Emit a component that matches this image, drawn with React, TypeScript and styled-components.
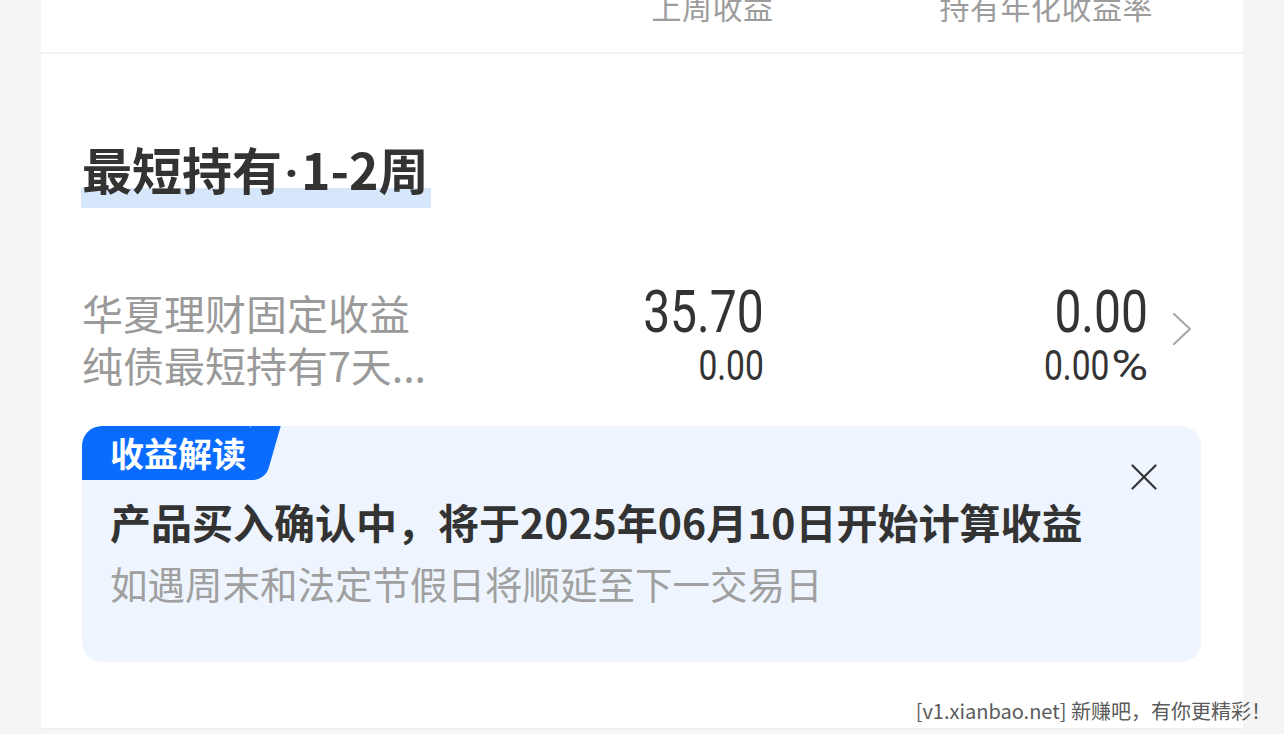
import React from "react";
import styled, { createGlobalStyle } from "styled-components";

const GlobalStyle = createGlobalStyle`
  html, body { margin: 0; padding: 0; background: #f5f5f5; }
  body { font-family: "Noto Sans CJK SC", "Noto Sans", sans-serif; overflow: hidden; }
  #root { width: 1284px; height: 734px; overflow: hidden; }
`;

const Page = styled.div`
  width: 1284px;
  height: 734px;
  background: #f5f5f5;
  position: relative;
`;

const Card = styled.div`
  margin: 0 41px;
  height: 729px;
  background: #ffffff;
  border-bottom: 1px solid #ececec;
  padding: 0 42px 0 41px;
  box-sizing: border-box;
  display: flex;
  flex-direction: column;
`;

const HeaderRow = styled.div`
  height: 52px;
  border-bottom: 2px solid #f3f3f3;
  margin: 0 -42px 0 -41px;
  padding-right: 90px;
  display: flex;
  justify-content: flex-end;
  align-items: flex-start;
  gap: 166px;
  overflow: hidden;
`;

const HeaderLabel = styled.span`
  font-size: 30px;
  line-height: 30px;
  margin-top: -9px;
  color: #9c9c9c;
  letter-spacing: 0.5px;
`;

const TitleWrap = styled.div`
  margin-top: 91px;
  display: flex;
`;

const Title = styled.h2`
  margin: 0 0 0 -1px;
  font-size: 50px;
  line-height: 46px;
  height: 46px;
  font-weight: 700;
  color: #333333;
  padding: 0 2px 17px 1px;
  background: linear-gradient(to top, #d6e6fb 20px, transparent 20px);
`;

const Dot = styled.span`
  font-family: "Roboto", sans-serif;
  line-height: 0;
  margin: 0 2px;
`;

const ProductRow = styled.div`
  margin-top: 78px;
  display: grid;
  grid-template-columns: 1fr 182px 384px 53px;
  align-items: start;
`;

const NameCol = styled.div`
  font-size: 41px;
  line-height: 52px;
  color: #9a9a9a;
  white-space: nowrap;
`;

const ValueCol = styled.div`
  display: flex;
  flex-direction: column;
  align-items: flex-end;
  font-family: "Roboto", sans-serif;
  font-weight: 400;
  color: #333333;
`;

const Num = styled.span<{ $big?: boolean }>`
  display: inline-block;
  font-size: ${(p) => (p.$big ? "60px" : "42px")};
  line-height: 52px;
  height: 52px;
  margin-top: ${(p) => (p.$big ? "0" : "2px")};
  transform: scaleX(0.8);
  transform-origin: right center;
  white-space: nowrap;
`;

const Unit = styled.span`
  margin-left: 2px;
  display: inline-block;
  transform: scaleX(1.5);
  transform-origin: left center;
  margin-right: 15px;
`;

const ChevronCell = styled.div`
  padding: 27px 0 0 24px;
  color: #a8a8a8;
  display: flex;
`;

const InfoBox = styled.div`
  margin-top: 34px;
  position: relative;
  background: #eef5fe;
  border-radius: 20px;
  padding-bottom: 53px;
`;

const Tag = styled.div`
  position: relative;
  z-index: 0;
  display: inline-block;
  height: 54px;
  box-sizing: border-box;
  padding: 0 4px 0 28px;
  background: #0a6cff;
  border-top-left-radius: 20px;
  color: #ffffff;
  font-size: 34px;
  line-height: 54px;
  font-weight: 700;
  &::after {
    content: "";
    position: absolute;
    z-index: -1;
    top: 0;
    left: 161px;
    width: 30px;
    height: 54px;
    background: #0a6cff;
    transform: skewX(-16deg);
    border-bottom-right-radius: 12px;
  }
`;

const CloseButton = styled.button`
  position: absolute;
  top: 38px;
  right: 44px;
  width: 26px;
  height: 26px;
  padding: 0;
  border: none;
  background: transparent;
  color: #333333;
  display: flex;
`;

const InfoMain = styled.p`
  margin: 13px 0 0 28px;
  font-size: 41px;
  line-height: 56px;
  font-weight: 700;
  color: #333333;
`;

const InfoSub = styled.p`
  margin: 8px 0 0 28px;
  font-size: 37.5px;
  line-height: 52px;
  color: #a0a0a0;
`;

const Watermark = styled.div`
  position: absolute;
  right: 13px;
  bottom: 9px;
  font-size: 20px;
  line-height: 28px;
  color: #5a5a5a;
  font-family: "Noto Sans CJK SC", "Noto Sans", sans-serif;
`;

export default function App() {
  return (
    <Page>
      <GlobalStyle />
      <Card>
        <HeaderRow>
          <HeaderLabel>上周收益</HeaderLabel>
          <HeaderLabel>持有年化收益率</HeaderLabel>
        </HeaderRow>
        <TitleWrap>
          <Title>
            最短持有<Dot>·</Dot>1-2周
          </Title>
        </TitleWrap>
        <ProductRow>
          <NameCol>
            <div>华夏理财固定收益</div>
            <div>纯债最短持有7天...</div>
          </NameCol>
          <ValueCol>
            <Num $big>35.70</Num>
            <Num>0.00</Num>
          </ValueCol>
          <ValueCol>
            <Num $big>0.00</Num>
            <Num>
              0.00<Unit>%</Unit>
            </Num>
          </ValueCol>
          <ChevronCell>
            <svg width="20" height="32" viewBox="0 0 20 32" fill="none">
              <polyline points="2,1 18,16 2,31" stroke="currentColor" strokeWidth="2.2" strokeLinecap="round" strokeLinejoin="round" />
            </svg>
          </ChevronCell>
        </ProductRow>
        <InfoBox>
          <Tag>收益解读</Tag>
          <CloseButton aria-label="关闭">
            <svg width="26" height="26" viewBox="0 0 26 26" fill="none">
              <path d="M1.5 1.5 L24.5 24.5 M24.5 1.5 L1.5 24.5" stroke="currentColor" strokeWidth="2.2" strokeLinecap="round" />
            </svg>
          </CloseButton>
          <InfoMain>产品买入确认中，将于2025年06月10日开始计算收益</InfoMain>
          <InfoSub>如遇周末和法定节假日将顺延至下一交易日</InfoSub>
        </InfoBox>
      </Card>
      <Watermark>[v1.xianbao.net] 新赚吧，有你更精彩！</Watermark>
    </Page>
  );
}
